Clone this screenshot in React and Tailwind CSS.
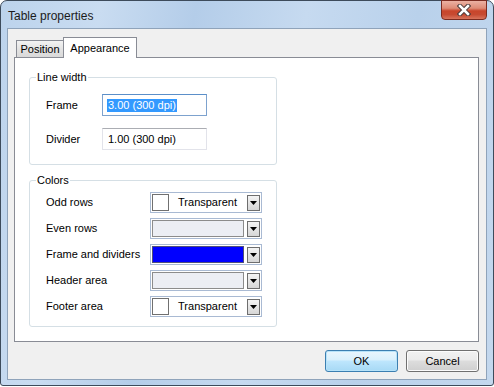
const colorRows = [
  { label: 'Odd rows', kind: 'transparent' },
  { label: 'Even rows', kind: 'empty' },
  { label: 'Frame and dividers', kind: 'blue' },
  { label: 'Header area', kind: 'empty' },
  { label: 'Footer area', kind: 'transparent' },
]

function CloseButton() {
  return (
    <div className="-mt-[1px] mr-[6px] w-[46px] h-[20px] rounded-b-[4px] border border-[#7a2b20] bg-[linear-gradient(to_bottom,#ebb1a3_0%,#de8b76_40%,#c8452b_55%,#c64a31_75%,#d8745c_100%)] flex items-center justify-center">
      <svg width="14" height="12" viewBox="0 0 14 12">
        <path d="M3 2 L11 10 M11 2 L3 10" stroke="#4a3a3a" strokeWidth="4.5" strokeLinecap="square" />
        <path d="M3 2 L11 10 M11 2 L3 10" stroke="#ffffff" strokeWidth="2.5" strokeLinecap="square" />
      </svg>
    </div>
  )
}

function DropButton() {
  return (
    <div className="ml-[3px] w-[13px] h-[16px] border border-[#6e6e6e] bg-[linear-gradient(to_bottom,#f4f4f4,#d6d6d6)] flex items-center justify-center">
      <svg width="7" height="4" viewBox="0 0 7 4">
        <path d="M0 0 L7 0 L3.5 4 Z" fill="#000" />
      </svg>
    </div>
  )
}

function ColorCombo({ kind }) {
  return (
    <div className="w-[112px] h-[21px] border border-[#a9bad3] p-[1px] flex items-center bg-white">
      {kind === 'transparent' && (
        <div className="flex-1 h-full flex items-center">
          <div className="w-[17px] h-full border border-[#707070] bg-white" />
          <span className="flex-1 text-center pl-[2px]">Transparent</span>
        </div>
      )}
      {kind === 'empty' && (
        <div className="flex-1 h-full border border-[#8c8c8c] bg-[#eceef4]" />
      )}
      {kind === 'blue' && (
        <div className="flex-1 h-full border border-[#505078] bg-[#0000ff]" />
      )}
      <DropButton />
    </div>
  )
}

export default function App() {
  return (
    <div className="w-[494px] h-[387px] bg-white text-[11px] leading-[13px] text-black font-['Liberation_Sans',Arial,sans-serif]">
      <div className="h-[386px] flex flex-col rounded-t-[7px] rounded-b-[3px] border border-[#3d4b5b] bg-[linear-gradient(100deg,#bcd3ec_0%,#c9dcf1_18%,#b4cde9_35%,#c6daf0_55%,#b9d1eb_75%,#c4d8ee_100%)]">
        {/* Title bar */}
        <div className="h-[27px] flex items-start justify-between">
          <span className="pl-[7px] pt-[8px] text-[12px] leading-[14px] text-[#1b1b1b]">Table properties</span>
          <CloseButton />
        </div>

        {/* Client area */}
        <div className="mx-[6px] mb-[5px] flex-1 border border-[#8fa3ba] bg-[#f0f0f0] flex flex-col pt-[8px] pl-[6px] pr-[7px]">
          {/* Tabs */}
          <div className="relative z-10 h-[21px] -mb-[1px] pl-[2px] flex items-end">
            <div className="mb-[1px] w-[47px] h-[17px] border-t border-l border-[#898c95] bg-[linear-gradient(to_bottom,#f3f3f3,#e3e3e3_50%,#d9d9d9)] flex items-center justify-center pt-[1px]">
              Position
            </div>
            <div className="w-[74px] h-[21px] border-t border-l border-r border-[#898c95] bg-white flex items-center justify-center">
              Appearance
            </div>
          </div>

          {/* Tab panel */}
          <div className="h-[285px] border border-[#898c95] bg-white pl-[14px]">
            <fieldset className="mt-[13px] w-[248px] border border-[#d5dfe5] rounded-[3px]">
              <legend className="ml-[6px] px-[1px]">Line width</legend>
              <div className="pl-[16px] pt-[10px] pb-[14px] flex flex-col gap-[12px]">
                <div className="flex items-center">
                  <span className="w-[56px]">Frame</span>
                  <div className="w-[105px] h-[22px] border border-[#7da2ce] border-t-[#5b8fc9] flex items-center pl-[4px]">
                    <span className="bg-[#3399ff] text-white px-[1px]">3.00 (300 dpi)</span>
                  </div>
                </div>
                <div className="flex items-center">
                  <span className="w-[56px]">Divider</span>
                  <div className="w-[105px] h-[22px] border border-[#e2e3ea] border-t-[#abadb3] flex items-center pl-[5px]">
                    1.00 (300 dpi)
                  </div>
                </div>
              </div>
            </fieldset>

            <fieldset className="mt-[9px] w-[248px] border border-[#d5dfe5] rounded-[3px]">
              <legend className="ml-[6px] px-[1px]">Colors</legend>
              <div className="pl-[16px] pt-[5px] pb-[9px] flex flex-col gap-[5px]">
                {colorRows.map((row) => (
                  <div key={row.label} className="flex items-center">
                    <span className="w-[104px]">{row.label}</span>
                    <ColorCombo kind={row.kind} />
                  </div>
                ))}
              </div>
            </fieldset>
          </div>

          {/* Buttons */}
          <div className="mt-[8px] flex justify-end gap-[8px]">
            <button className="w-[73px] h-[22px] rounded-[3px] border border-[#3c7fb1] bg-[linear-gradient(to_bottom,#eaf6fd_0%,#d9f0fc_45%,#bee6fd_50%,#a7d9f5_100%)] shadow-[inset_0_0_0_1px_#b8e3f9]">
              OK
            </button>
            <button className="w-[73px] h-[22px] rounded-[3px] border border-[#707070] bg-[linear-gradient(to_bottom,#f2f2f2_0%,#ebebeb_45%,#dddddd_50%,#cfcfcf_100%)] shadow-[inset_0_0_0_1px_#fcfcfc]">
              Cancel
            </button>
          </div>
        </div>
      </div>
    </div>
  )
}
